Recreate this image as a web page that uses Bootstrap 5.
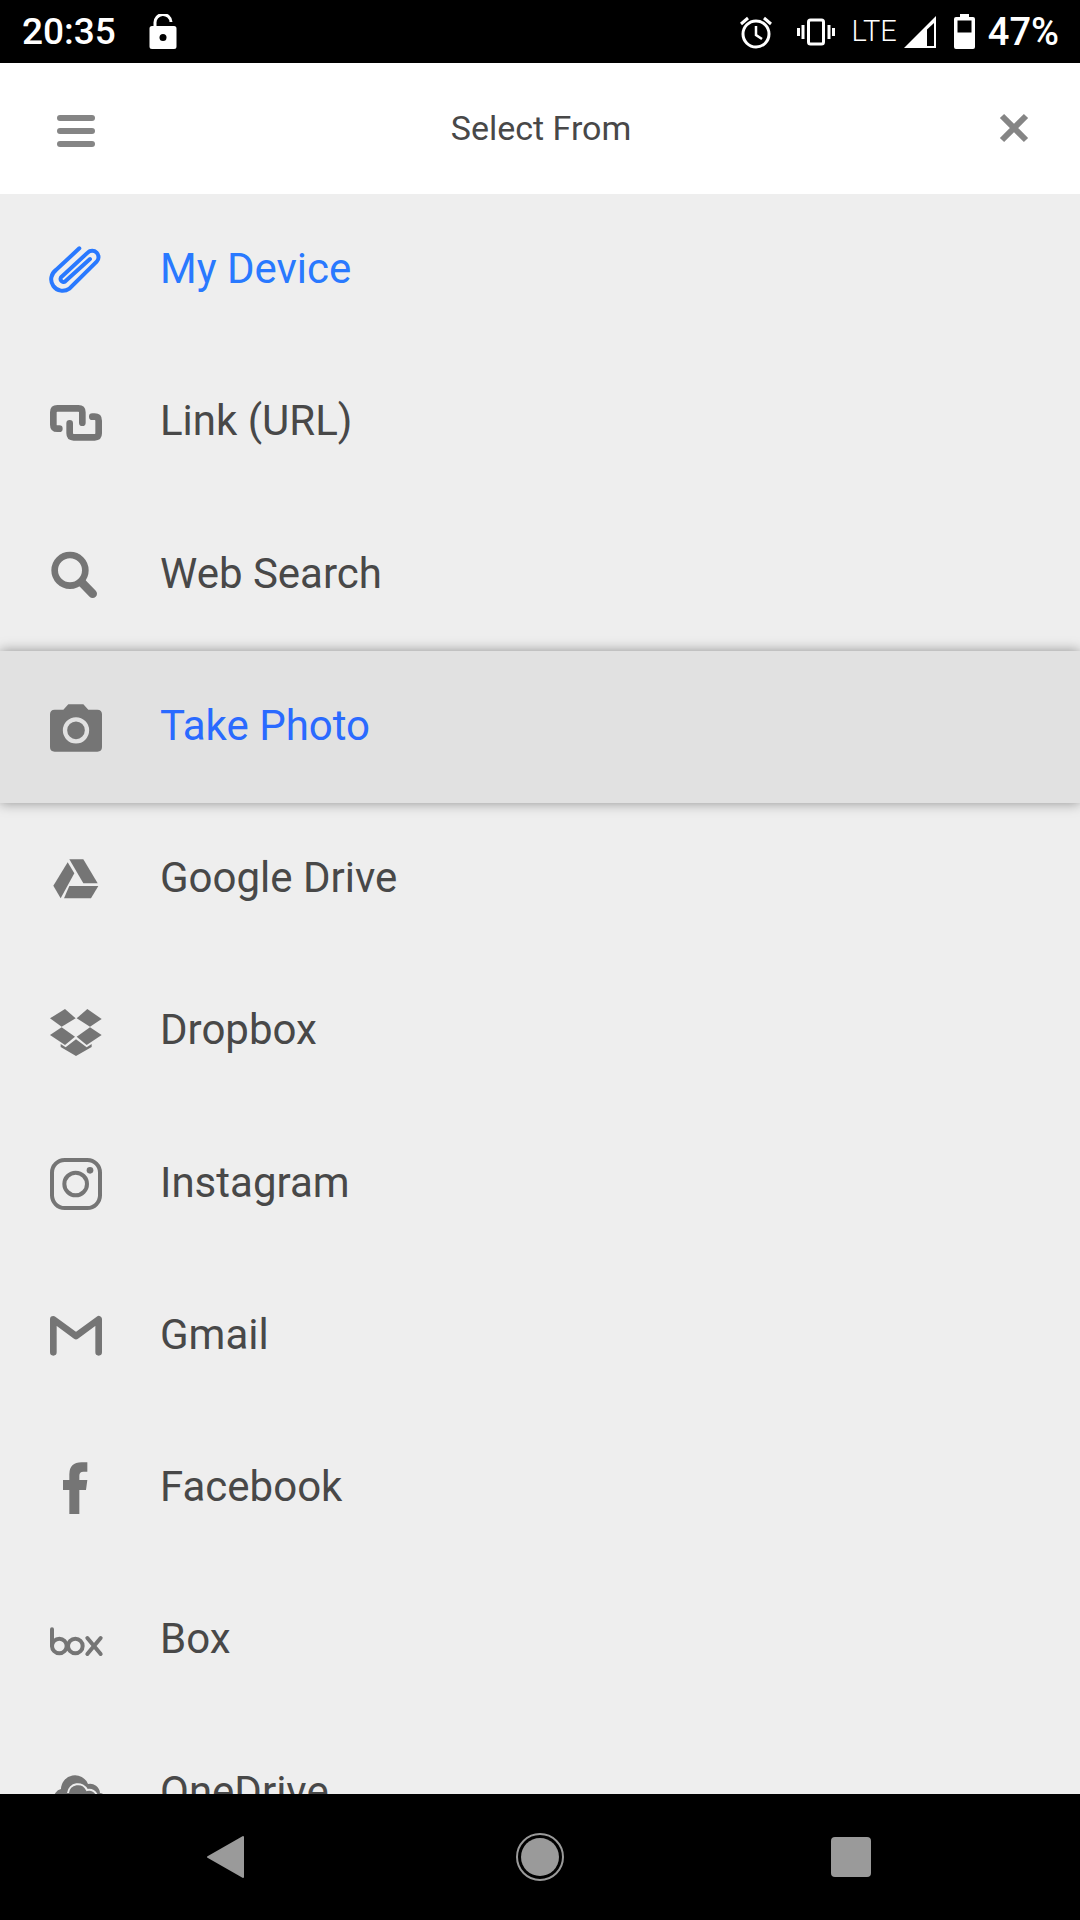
<!DOCTYPE html>
<html lang="en">
<head>
    <meta charset="UTF-8">
    <meta name="viewport" content="width=device-width, initial-scale=1.0">
    <title>Select From</title>
    <link href="https://cdn.jsdelivr.net/npm/bootstrap@5.3.0/dist/css/bootstrap.min.css" rel="stylesheet">
    <style>
        body {
            width: 1080px;
            height: 1920px;
            overflow: hidden;
            background: #eee;
            font-family: Roboto, "Liberation Sans", sans-serif;
        }
        .phone-screen { height: 1920px; }
        .status-strip {
            height: 63px;
            background: #000;
            color: #fff;
            padding: 0 21px 0 22px;
        }
        .status-time { font-size: 37px; font-weight: 500; line-height: 1; margin-right: 33px; }
        .status-lte { font-size: 29px; font-weight: 300; line-height: 1; margin: 0 7px 0 17px; }
        .status-pct { font-size: 38px; font-weight: 500; line-height: 1; margin-left: 13px; }
        .status-batt { margin-left: 17px; }
        .top-bar {
            height: 131px;
            background: #fff;
            padding: 0 47px 0 57px;
            flex-wrap: nowrap;
        }
        .top-menu { margin-top: 5px; }
        .top-close { margin-top: -2px; }
        .top-title {
            font-size: 34px;
            color: #484848;
            line-height: 1;
            margin: -2px 8px 0 0;
        }
        .source-list { flex: 1 1 0; min-height: 0; overflow: hidden; background: #eee; border-radius: 0; }
        .source-row {
            height: 152.25px;
            flex: none;
            padding: 0 0 0 46px;
            border: 0;
            background: #eee;
            color: #484848;
            font-size: 42px;
            line-height: 1;
            gap: 54px;
        }
        .source-row .row-label { position: relative; top: -1px; }
        .source-row svg { flex: none; }
        .source-row.is-picked { color: #2979ff; }
        .source-row.is-pressed {
            color: #2a6aff;
            background: #e1e1e1;
            position: relative;
            z-index: 2;
            box-shadow: 0 0 12px rgba(0, 0, 0, .4);
        }
        .nav-strip { height: 126px; background: #000; gap: 254px; flex: none; }
    </style>
</head>
<body>
<div class="phone-screen d-flex flex-column">
    <div class="status-strip d-flex align-items-center flex-none">
        <span class="status-time">20:35</span>
        <svg width="28" height="36" viewBox="0 0 28 36"><path fill="#fff" d="M3 12h22a2.500 2.500 0 0 1 2.500 2.500v18a2.500 2.500 0 0 1-2.500 2.500H3a2.500 2.500 0 0 1-2.500-2.500v-18A2.500 2.500 0 0 1 3 12z"/><path fill="none" stroke="#fff" stroke-width="3" d="M6 12V9a8 8 0 0 1 16 -1"/><circle cx="14" cy="23.500" r="3.500" fill="#000"/></svg>
        <svg class="ms-auto" width="34" height="36" viewBox="0 0 34 36" fill="none" stroke="#fff" stroke-width="3"><circle cx="17" cy="20" r="13"/><path d="M17 12v9l6 4" stroke-width="2.500"/><path d="M2 10l7-6M32 10l-7-6" stroke-width="3"/></svg>
        <svg class="ms-4" width="38" height="28" viewBox="0 0 38 28" fill="none" stroke="#fff"><rect x="11.500" y="2" width="15" height="24" rx="2" stroke-width="3"/><path d="M6 7v14M1.500 10v8M32 7v14M36.500 10v8" stroke-width="3"/></svg>
        <span class="status-lte">LTE</span>
        <svg width="33" height="32" viewBox="0 0 33 32"><path fill="#fff" d="M0 32L32 0v32z"/><path fill="#000" d="M23 13.500l7-6.500v23h-7z"/></svg>
        <svg class="status-batt" width="21" height="35" viewBox="0 0 21 35"><path fill="#fff" d="M6 0h9v3h4a2 2 0 0 1 2 2v28a2 2 0 0 1-2 2H2a2 2 0 0 1-2-2V5a2 2 0 0 1 2-2h4z"/><rect x="3.500" y="6.500" width="14" height="12" fill="#000"/></svg>
        <span class="status-pct">47%</span>
    </div>

    <nav class="navbar top-bar flex-none">
        <svg class="top-menu" width="38" height="32" viewBox="0 0 38 32" fill="#858585"><rect y="0" width="38" height="6" rx="3"/><rect y="13" width="38" height="6" rx="3"/><rect y="26" width="38" height="6" rx="3"/></svg>
        <span class="top-title">Select From</span>
        <svg class="top-close" width="38" height="38" viewBox="0 0 38 38" stroke="#858585" stroke-width="6"><path d="M7 7l24 24M31 7L7 31"/></svg>
    </nav>

    <div class="list-group list-group-flush source-list">
        <div class="list-group-item source-row is-picked d-flex align-items-center">
            <svg width="60" height="60" viewBox="48 60 180 180" fill="none" stroke="#2979ff" stroke-width="12" stroke-linecap="round"><path d="M148 85L78 150A29 29 0 0 0 118 206L200 125A17 17 0 0 0 173 98L95 170A8 8 0 0 0 106 184L180 117"/></svg>
            <span class="row-label">My Device</span>
        </div>
        <div class="list-group-item source-row d-flex align-items-center">
            <svg width="60" height="60" viewBox="48 516 180 180" fill="none" stroke="#757575" stroke-width="20" stroke-linecap="round" stroke-linejoin="round"><path d="M88 626H82Q70 626 70 614V577Q70 565 82 565H145Q157 565 157 577V608"/><path d="M119 610V640Q119 652 131 652H194Q206 652 206 640V602Q206 590 194 590H187"/></svg>
            <span class="row-label">Link (URL)</span>
        </div>
        <div class="list-group-item source-row d-flex align-items-center">
            <svg width="60" height="60" viewBox="48 974 180 180" fill="none" stroke="#757575"><circle cx="120" cy="1050" r="46" stroke-width="20"/><path d="M156 1087L188 1120" stroke-width="26" stroke-linecap="round"/></svg>
            <span class="row-label">Web Search</span>
        </div>
        <div class="list-group-item source-row is-pressed d-flex align-items-center">
            <svg width="60" height="60" viewBox="138 200 180 180"><path fill="#757575" d="M164 238H190L205 222H250L265 238H292Q306 238 306 252V350Q306 364 292 364H164Q150 364 150 350V252Q150 238 164 238Z"/><circle cx="228" cy="300" r="33" fill="none" stroke="#e1e1e1" stroke-width="13"/></svg>
            <span class="row-label">Take Photo</span>
        </div>
        <div class="list-group-item source-row d-flex align-items-center">
            <svg width="60" height="60" viewBox="48 27 180 180" fill="#757575"><path d="M118 58H160L203 130H160Z"/><path d="M70 137L113 67L133 100L92 175Z"/><path d="M118 138H205L183 175H102Z"/></svg>
            <span class="row-label">Google Drive</span>
        </div>
        <div class="list-group-item source-row d-flex align-items-center">
            <svg width="60" height="60" viewBox="48 483 180 180" fill="#757575"><path d="M60 535L105 507L137 535L95 560Z"/><path d="M140 535L172 507L215 537L180 560Z"/><path d="M60 585L95 562L135 590L105 615Z"/><path d="M140 590L180 562L215 585L170 615Z"/><path d="M92 612L107 622L138 598L170 622L185 612V621L138 648L92 621Z"/></svg>
            <span class="row-label">Dropbox</span>
        </div>
        <div class="list-group-item source-row d-flex align-items-center">
            <svg width="60" height="60" viewBox="48 941 180 180" fill="none" stroke="#757575" stroke-width="12"><rect x="66" y="959" width="144" height="144" rx="38"/><circle cx="137" cy="1031" r="34"/><circle cx="180" cy="990" r="10" fill="#757575" stroke="none"/></svg>
            <span class="row-label">Instagram</span>
        </div>
        <div class="list-group-item source-row d-flex align-items-center">
            <svg width="60" height="60" viewBox="48 48 180 180" fill="none" stroke="#757575" stroke-width="20" stroke-linecap="round" stroke-linejoin="round"><path d="M70 187V88L138 138L206 88V187"/></svg>
            <span class="row-label">Gmail</span>
        </div>
        <div class="list-group-item source-row d-flex align-items-center">
            <svg width="60" height="60" viewBox="48 504 180 180"><path fill="#757575" d="M118 672V600H99V570H118V553Q118 517 155 517H172V545H160Q148 545 148 557V570H172L168 600H148V672Z"/></svg>
            <span class="row-label">Facebook</span>
        </div>
        <div class="list-group-item source-row d-flex align-items-center">
            <svg width="60" height="60" viewBox="48 960 180 180" fill="none" stroke="#757575" stroke-width="12" stroke-linecap="round"><path d="M66 1018V1067"/><circle cx="88" cy="1068" r="22"/><circle cx="136" cy="1068" r="22"/><path d="M172 1044L212 1092M212 1044L172 1092"/></svg>
            <span class="row-label">Box</span>
        </div>
        <div class="list-group-item source-row d-flex align-items-center">
            <svg width="60" height="60" viewBox="0 0 60 60"><path fill="#757575" d="M8 36a9 9 0 0 1 7-10 14 14 0 0 1 27-5 10 10 0 0 1 12 9 8 8 0 0 1-2 16H14a8 8 0 0 1-6-10z"/><path fill="none" stroke="#eee" stroke-width="2" d="M22 30a10 10 0 0 1 19-3 8 8 0 0 1 10 6"/></svg>
            <span class="row-label">OneDrive</span>
        </div>
    </div>

    <div class="nav-strip d-flex align-items-center justify-content-center position-relative">
        <svg width="60" height="60" viewBox="0 0 60 60"><path fill="#9a9a9a" stroke="#9a9a9a" stroke-width="2" stroke-linejoin="round" d="M47 10V50L12 30Z"/></svg>
        <svg width="60" height="60" viewBox="0 0 60 60"><circle cx="30" cy="30" r="23" fill="none" stroke="#9a9a9a" stroke-width="2"/><circle cx="30" cy="30" r="19" fill="#9a9a9a"/></svg>
        <svg width="60" height="60" viewBox="0 0 60 60"><rect x="7" y="10" width="40" height="40" rx="4" fill="#9a9a9a"/></svg>
    </div>
</div>
<script src="https://cdn.jsdelivr.net/npm/bootstrap@5.3.0/dist/js/bootstrap.bundle.min.js"></script>
</body>
</html>
